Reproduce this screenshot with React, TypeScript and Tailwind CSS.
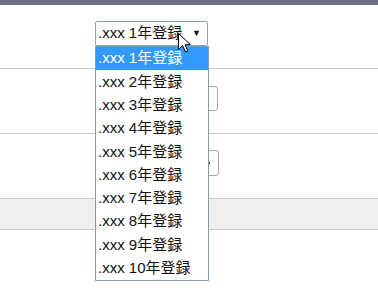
const years = [1, 2, 3, 4, 5, 6, 7, 8, 9, 10]

const Cursor = () => (
    <svg width="13" height="20" viewBox="0 0 13 20" className="absolute left-[178px] top-[33px]">
        <path d="M0.5 0.5 L0.5 16.5 L4.5 12.5 L7.5 19 L9.8 18 L7 11.7 L12.5 11.7 Z" fill="#ffffff" stroke="#000000" strokeWidth="1" strokeLinejoin="miter" />
    </svg>
)

const App = () => {
    return (
        <main className="relative w-[378px] h-[297px] bg-white overflow-hidden" style={{ fontFamily: '"Liberation Sans", "Noto Sans CJK JP", Arial, sans-serif' }}>
            <div className="h-[5px] bg-[#6e6f86]" />
            <div className="h-[64px] flex items-start pt-[16px] pl-[95px] border-b border-[#c9c9c9]">
                <div className="w-[113px] h-[25px] border border-[#7ea2d6] rounded-[2px] flex items-center justify-between pl-[2px] pr-[6px] text-[15px] text-[#111]">
                    <span>.xxx 1年登録</span>
                    <span className="text-[9px]">▼</span>
                </div>
            </div>
            <div className="h-[65px] flex items-start pt-[17px] pl-[120px] border-b border-[#c9c9c9]">
                <div className="w-[98px] h-[25px] border border-[#a9a9a9] rounded-[3px]" />
            </div>
            <div className="h-[65px] flex items-start pt-[16px] pl-[120px] border-b border-[#c9c9c9]">
                <div className="w-[99px] h-[26px] border border-[#a9a9a9] rounded-[3px] flex items-center justify-end pr-[8px]">
                    <span className="w-[2px] h-[2px] bg-[#333]" />
                </div>
            </div>
            <div className="h-[31px] bg-[#f0f0f0] border-b border-[#c9c9c9]" />

            <ul className="absolute left-[95px] top-[46px] w-[114px] border border-[#7f9db9] bg-white text-[15px] text-[#111]">
                {years.map((y) => (
                    <li key={y} className={`h-[23.3px] flex items-center pl-[2px] ${y === 1 ? 'bg-[#3399ff] text-white' : ''}`}>
                        .xxx {y}年登録
                    </li>
                ))}
            </ul>
            <Cursor />
        </main>
    )
}

export default App
